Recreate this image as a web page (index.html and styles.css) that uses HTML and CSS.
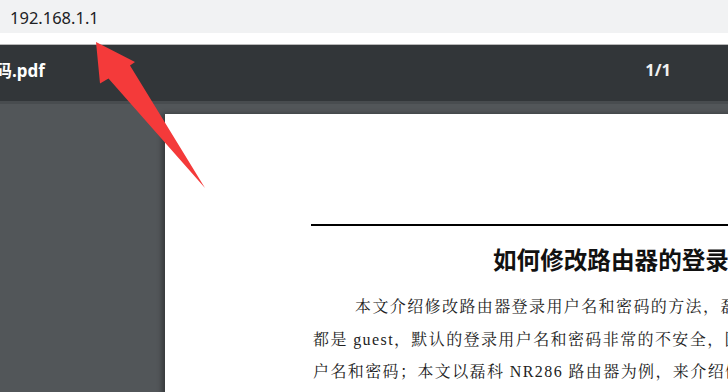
FILE: index.html
```html
<!DOCTYPE html>
<html lang="zh-CN">
<head>
<meta charset="utf-8">
<title>192.168.1.1</title>
<link rel="stylesheet" href="styles.css">
</head>
<body>
<div class="screen">
  <div class="addressbar"><span class="url">192.168.1.1</span></div>
  <div class="gap"></div>
  <div class="toolbar">
    <span class="filename">码.pdf</span>
    <span class="counter">1/1</span>
  </div>
  <div class="viewer">
    <div class="page">
      <div class="rule"></div>
      <h1 class="doc-title">如何修改路由器的登录用户名和密码</h1>
      <div class="para">
        <div class="line first">本文介绍修改路由器登录用户名和密码的方法，磊科路由器</div>
        <div class="line">都是 guest，默认的登录用户名和密码非常的不安全，因此</div>
        <div class="line">户名和密码；本文以磊科 NR286 路由器为例，来介绍修改</div>
      </div>
    </div>
  </div>
  <svg class="arrow" width="728" height="392" viewBox="0 0 728 392" aria-hidden="true">
    <polygon points="96,42 135,62 130,65.5 205,188 108.5,78.5 100,83.5" fill="#f43a3a"/>
  </svg>
</div>
</body>
</html>
```
FILE: styles.css
```css
html, body {
  margin: 0;
  padding: 0;
}
body {
  width: 728px;
  height: 392px;
  overflow: hidden;
  background: #525659;
}
.screen {
  position: relative;
  width: 728px;
  height: 392px;
  overflow: hidden;
  display: flex;
  flex-direction: column;
}
.addressbar {
  height: 33px;
  box-sizing: border-box;
  padding-top: 2px;
  padding-left: 10px;
  background: #f1f2f3;
  font-family: "Noto Sans", "Liberation Sans", sans-serif;
  font-size: 16.5px;
  line-height: 31px;
  color: #202124;
  flex: none;
}
.gap {
  height: 11px;
  background: #ffffff;
  border-bottom: 1px solid #b9b9b9;
  flex: none;
}
.toolbar {
  height: 56px;
  box-sizing: border-box;
  padding-bottom: 7px;
  background: #323639;
  display: flex;
  align-items: center;
  color: #ffffff;
  font-family: "Noto Sans", "Noto Sans CJK SC", sans-serif;
  font-weight: 700;
  font-size: 17px;
  box-shadow: 0 3px 0 #484c4f;
  position: relative;
  z-index: 1;
  flex: none;
}
.filename {
  margin-left: -5px;
  font-family: "Noto Sans", "Noto Sans CJK SC", sans-serif;
}
.counter {
  margin-left: auto;
  margin-right: 57px;
  font-size: 16.5px;
  color: #f1f1f1;
}
.viewer {
  flex: 1;
  padding-top: 13px;
  padding-left: 165px;
  overflow: hidden;
}
.page {
  width: 800px;
  height: 300px;
  background: #ffffff;
  box-shadow: -3px 0 5px rgba(0, 0, 0, 0.35);
  overflow: hidden;
}
.rule {
  margin-left: 146px;
  margin-top: 110px;
  height: 2px;
  background: #000000;
}
.doc-title {
  margin: 21px 0 0 328px;
  font-family: "Noto Sans CJK SC", sans-serif;
  font-weight: 700;
  font-size: 23.6px;
  line-height: 24px;
  color: #111111;
  white-space: nowrap;
}
.para {
  margin-top: 20px;
  padding-left: 148px;
  font-family: "Liberation Serif", "Noto Serif CJK SC", "Noto Sans CJK SC", serif;
  font-size: 16px;
  letter-spacing: 1.4px;
  line-height: 32.5px;
  color: #222222;
}
.line {
  white-space: nowrap;
}
.line.first {
  padding-left: 42px;
}
.arrow {
  position: absolute;
  left: 0;
  top: 0;
  z-index: 2;
  pointer-events: none;
}
```
